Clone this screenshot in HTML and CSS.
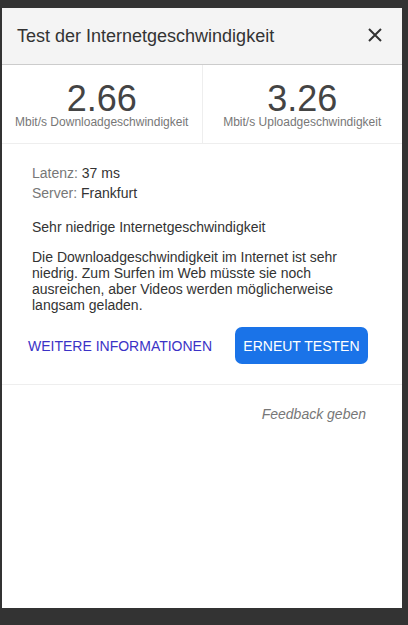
FILE: index.html
```html
<!DOCTYPE html>
<html lang="de">
<head>
    <meta charset="UTF-8">
    <meta name="viewport" content="width=device-width, initial-scale=1.0">
    <title>Test der Internetgeschwindigkeit</title>
    <link rel="stylesheet" href="styles.css">
</head>
<body>
    <div class="dialog">
        <div class="header">
            <h1>Test der Internetgeschwindigkeit</h1>
            <button class="close" aria-label="Schließen">
                <svg width="14" height="14" viewBox="0 0 14 14">
                    <path d="M1 1L13 13M13 1L1 13" stroke="#333" stroke-width="2" fill="none"/>
                </svg>
            </button>
        </div>

        <div class="stats">
            <div class="stat">
                <div class="value">2.66</div>
                <div class="unit">Mbit/s Downloadgeschwindigkeit</div>
            </div>
            <div class="stat">
                <div class="value">3.26</div>
                <div class="unit">Mbit/s Uploadgeschwindigkeit</div>
            </div>
        </div>

        <div class="content">
            <div class="info"><span class="label">Latenz:</span> 37 ms</div>
            <div class="info"><span class="label">Server:</span> Frankfurt</div>

            <p class="rating">Sehr niedrige Internetgeschwindigkeit</p>
            <p class="desc">Die Downloadgeschwindigkeit im Internet ist sehr niedrig. Zum Surfen im Web müsste sie noch ausreichen, aber Videos werden möglicherweise langsam geladen.</p>

            <div class="actions">
                <a class="more" href="#">Weitere Informationen</a>
                <button class="retry">Erneut testen</button>
            </div>
        </div>

        <div class="footer">
            <a class="feedback" href="#">Feedback geben</a>
        </div>
    </div>
</body>
</html>
```

FILE: styles.css
```css
body {
    background: #333;
    margin: 0;
    padding: 0;
    font-family: 'Liberation Sans', Arial, sans-serif;
    color: #333;
}
.dialog {
    width: 400px;
    height: 600px;
    margin: 8px 0 0 2px;
    background: #fff;
    display: flex;
    flex-direction: column;
}
.header {
    height: 56px;
    background: #f4f4f4;
    border-bottom: 1px solid #ccc;
    display: flex;
    align-items: center;
    justify-content: space-between;
    padding: 0 20px 0 15px;
}
h1 {
    margin: 0;
    font-size: 18px;
    font-weight: normal;
    line-height: 56px;
    color: #333;
}
.close {
    background: none;
    border: none;
    padding: 0;
    width: 14px;
    height: 14px;
    margin-top: -2px;
    cursor: pointer;
}
.close svg {
    display: block;
}
.stats {
    display: flex;
    height: 78px;
    border-bottom: 1px solid #eee;
}
.stat {
    flex: 1;
    text-align: center;
    padding-top: 17px;
}
.stat + .stat {
    border-left: 1px solid #eee;
}
.value {
    font-size: 36px;
    line-height: 34px;
    color: #444;
}
.unit {
    font-size: 12px;
    line-height: 12px;
    color: #777;
}
.content {
    padding: 19px 30px 0;
    font-size: 14px;
    border-bottom: 1px solid #eee;
}
.info {
    line-height: 20px;
    color: #333;
}
.label {
    color: #777;
}
.rating {
    margin: 14px 0 0;
    line-height: 20px;
}
.desc {
    margin: 12px 0 0;
    line-height: 16px;
    padding-right: 30px;
}
.actions {
    display: flex;
    align-items: center;
    justify-content: space-between;
    margin: 14px 4px 20px -4px;
}
.more {
    color: #3b32c6;
    text-decoration: none;
    text-transform: uppercase;
    font-size: 14px;
}
.retry {
    background: #1a73e8;
    color: #fff;
    border: none;
    border-radius: 7px;
    height: 37px;
    padding: 0 8.5px;
    font-family: inherit;
    font-size: 14px;
    text-transform: uppercase;
    cursor: pointer;
}
.footer {
    padding: 19px 36px 0;
    text-align: right;
}
.feedback {
    font-size: 14px;
    line-height: 20px;
    font-style: italic;
    color: #777;
    text-decoration: none;
}
```
